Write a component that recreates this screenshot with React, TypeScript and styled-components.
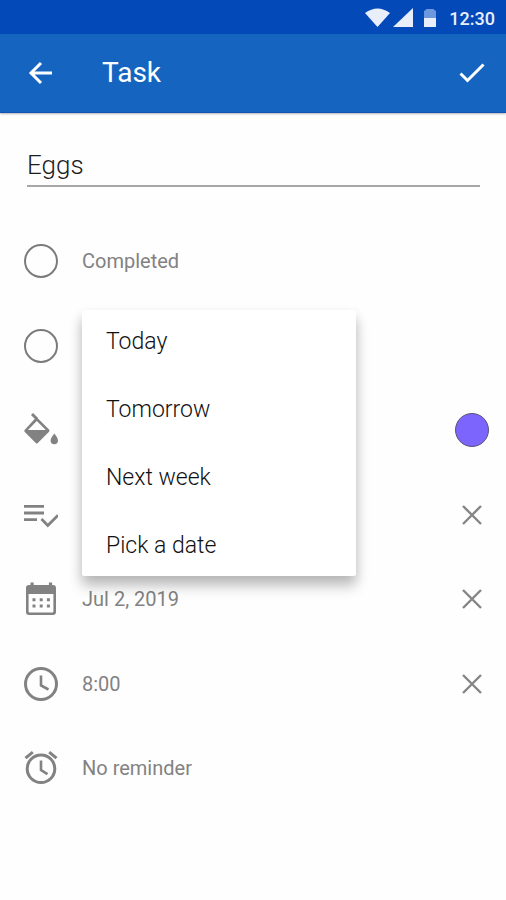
import React, { useState } from "react";
import styled, { createGlobalStyle } from "styled-components";

const GlobalStyle = createGlobalStyle`
  *, *::before, *::after { box-sizing: border-box; }
  body {
    margin: 0;
    background: #fefefe;
    font-family: Roboto, "Liberation Sans", sans-serif;
  }
  button, input { font: inherit; color: inherit; margin: 0; }
`;

const Screen = styled.div`
  display: flex;
  flex-direction: column;
  min-height: 100vh;
`;

const StatusBar = styled.div`
  display: flex;
  align-items: center;
  justify-content: flex-end;
  height: 34px;
  padding: 2px 11px 0 0;
  background: #0349b8;
  color: #e8effb;
  font-size: 18px;
  font-weight: 500;
`;

const StatusIcons = styled.svg`
  width: 72px;
  height: 20px;
  margin-right: 12px;
`;

const AppBar = styled.header`
  display: flex;
  align-items: center;
  height: 79px;
  padding: 0 16px 0 22px;
  background: #1565c0;
  color: #fff;
  border-bottom: 1px solid #0d55b4;
  box-shadow: 0 1px 2px rgba(0, 0, 0, 0.3);
`;

const Title = styled.h1`
  flex: 1;
  margin: 0 0 0 44px;
  font-size: 28px;
  line-height: 32px;
  font-weight: 400;
`;

const IconButton = styled.button`
  display: grid;
  place-items: center;
  width: 36px;
  height: 36px;
  padding: 0;
  border: 0;
  background: none;
  cursor: pointer;
`;

const Form = styled.main`
  display: flex;
  flex-direction: column;
`;

const NameInput = styled.input`
  height: 40px;
  margin: 34px 26px 32px 27px;
  padding: 0 0 2px;
  border: 0;
  border-bottom: 2px solid #a6a6a6;
  border-radius: 0;
  outline: 0;
  background: none;
  color: #1c1c1c;
  font-size: 26px;
  font-weight: 300;
`;

const Rows = styled.div`
  display: flex;
  flex-direction: column;
`;

const Row = styled.div`
  position: relative;
  display: flex;
  align-items: center;
  height: 84px;
  padding: 0 16px 0 24px;
  color: #828282;

  &:nth-child(even) { height: 85px; }
`;

const RowIcon = styled.svg`
  flex: none;
  width: 34px;
  height: 36px;
`;

const RoundCheck = styled.input`
  appearance: none;
  flex: none;
  width: 34px;
  height: 34px;
  border: 2px solid #7b7b7b;
  border-radius: 50%;
  cursor: pointer;

  &:checked { background: #7b7b7b; box-shadow: inset 0 0 0 5px #fefefe; }
`;

const rowText = `
  flex: 1;
  margin-left: 24px;
  font-size: 20px;
  line-height: 24px;
  text-align: left;
`;

const RowLabel = styled.label`${rowText}`;

const RowValue = styled.button`
  ${rowText}
  padding: 0;
  border: 0;
  background: none;
  cursor: pointer;
`;

const Spacer = styled.div`
  flex: 1;
`;

const ColorSwatch = styled.button`
  width: 34px;
  height: 34px;
  margin-right: 1px;
  border: 1px solid #5c5470;
  border-radius: 50%;
  background: #7c65fd;
  cursor: pointer;
`;

const Menu = styled.div`
  position: absolute;
  z-index: 1;
  top: 7px;
  left: 82px;
  display: flex;
  flex-direction: column;
  width: 274px;
  gap: 6px;
  border-radius: 2px;
  background: #fff;
  box-shadow: 0 10px 14px rgba(0, 0, 0, 0.24), 0 4px 12px rgba(0, 0, 0, 0.08);
`;

const MenuItem = styled.button`
  height: 62px;
  padding: 0 24px;
  border: 0;
  background: none;
  color: #111;
  font-size: 23px;
  font-weight: 300;
  text-align: left;
  cursor: pointer;
`;

const BackIcon = () => (
  <svg width="24" height="24" viewBox="0 0 24 24" fill="none" stroke="currentColor" strokeWidth="3" aria-hidden="true">
    <path d="M24 12H3M13 2 3 12 13 22" />
  </svg>
);

const DoneIcon = () => (
  <svg width="26" height="20" viewBox="0 0 26 20" fill="none" stroke="currentColor" strokeWidth="3" aria-hidden="true">
    <path d="M1.5 10.5 8.5 17.5 24.5 1.5" />
  </svg>
);

const CloseIcon = () => (
  <svg width="20" height="20" viewBox="0 0 20 20" fill="none" stroke="#858585" strokeWidth="2.4" aria-hidden="true">
    <path d="M1 1 19 19M19 1 1 19" />
  </svg>
);

const FillIcon = () => (
  <RowIcon viewBox="0 0 34 36" aria-hidden="true">
    <path d="M8 2 13 7" fill="none" stroke="#828282" strokeWidth="3" />
    <path
      d="M12.5 5 25 17.5Q26 18.6 25 19.7L13.8 31Q12.8 32 11.8 31L.8 20Q-.2 18.8.8 17.7ZM12.8 9 4 18H21.8Z"
      fill="#828282"
      fillRule="evenodd"
    />
    <path d="M30.3 21.5C32 24 34 26 34 28.5a3.7 3.7 0 0 1-7.4 0C26.6 26 28.6 24 30.3 21.5Z" fill="#828282" />
  </RowIcon>
);

const ListCheckIcon = () => (
  <RowIcon viewBox="0 0 34 36" fill="none" stroke="#828282" strokeWidth="2.8" aria-hidden="true">
    <path d="M0 9.4H20M0 16H20M0 22.6H13" />
    <path d="M17.5 22 23.8 28.4 34 18.2" />
  </RowIcon>
);

const CalendarIcon = () => (
  <RowIcon viewBox="0 0 34 36" aria-hidden="true">
    <path
      d="M6.5 1.5h3.2V4h15.2V1.5h3.2V4H29a3 3 0 0 1 3 3v24a3 3 0 0 1-3 3H5a3 3 0 0 1-3-3V7a3 3 0 0 1 3-3h1.5ZM4.6 13v17.2a1.2 1.2 0 0 0 1.2 1.2h22.4a1.2 1.2 0 0 0 1.2-1.2V13Z"
      fill="#828282"
      fillRule="evenodd"
    />
    <path d="M8.5 18.8h17.5M8.5 25h17.5" stroke="#828282" strokeWidth="3" strokeDasharray="3 4.2" />
  </RowIcon>
);

const ClockIcon = () => (
  <RowIcon viewBox="0 0 34 36" fill="none" stroke="#828282" strokeWidth="3" aria-hidden="true">
    <circle cx="17" cy="18" r="15.5" />
    <path d="M17 9.5V19.5L24.5 23.5" strokeWidth="2.6" />
  </RowIcon>
);

const AlarmIcon = () => (
  <RowIcon viewBox="0 0 34 36" fill="none" stroke="#828282" strokeWidth="3" aria-hidden="true">
    <circle cx="17" cy="18.8" r="13.8" />
    <path d="M17 10.5V20L23.5 24.2" strokeWidth="2.6" />
    <path d="M1.5 8.2 8.8 2.2M32.5 8.2 25.2 2.2" />
  </RowIcon>
);

const ClearButton = ({ label }: { label: string }) => (
  <IconButton type="button" aria-label={label}>
    <CloseIcon />
  </IconButton>
);

const dueOptions = ["Today", "Tomorrow", "Next week", "Pick a date"];

export default function App() {
  const [name, setName] = useState("Eggs");

  return (
    <Screen>
      <GlobalStyle />
      <StatusBar>
        <StatusIcons viewBox="0 0 72 20" fill="#e8effb" aria-hidden="true">
          <path d="M0 5Q12.5-4 25 5L12.5 19Z" />
          <path d="M28 19 48 0V19Z" />
          <path d="M59 10V3.500Q59 2 61 2V1H69V2Q71 2 71 3.500V10Z" fill="#6c98dd" />
          <path d="M59 10H71V19H59Z" />
        </StatusIcons>
        <time>12:30</time>
      </StatusBar>
      <AppBar>
        <IconButton type="button" aria-label="Back">
          <BackIcon />
        </IconButton>
        <Title>Task</Title>
        <IconButton type="button" aria-label="Save">
          <DoneIcon />
        </IconButton>
      </AppBar>
      <Form>
        <NameInput aria-label="Task name" value={name} onChange={(e) => setName(e.target.value)} />
        <Rows>
          <Row>
            <RoundCheck type="checkbox" id="completed" />
            <RowLabel htmlFor="completed">Completed</RowLabel>
          </Row>
          <Row>
            <RoundCheck type="checkbox" aria-label="Important" />
            <Menu role="menu" aria-label="Due date">
              {dueOptions.map((option) => (
                <MenuItem key={option} type="button" role="menuitem">
                  {option}
                </MenuItem>
              ))}
            </Menu>
          </Row>
          <Row>
            <FillIcon />
            <Spacer />
            <ColorSwatch type="button" aria-label="Color" />
          </Row>
          <Row>
            <ListCheckIcon />
            <Spacer />
            <ClearButton label="Clear list" />
          </Row>
          <Row>
            <CalendarIcon />
            <RowValue type="button">Jul 2, 2019</RowValue>
            <ClearButton label="Clear date" />
          </Row>
          <Row>
            <ClockIcon />
            <RowValue type="button">8:00</RowValue>
            <ClearButton label="Clear time" />
          </Row>
          <Row>
            <AlarmIcon />
            <RowValue type="button">No reminder</RowValue>
          </Row>
        </Rows>
      </Form>
    </Screen>
  );
}
